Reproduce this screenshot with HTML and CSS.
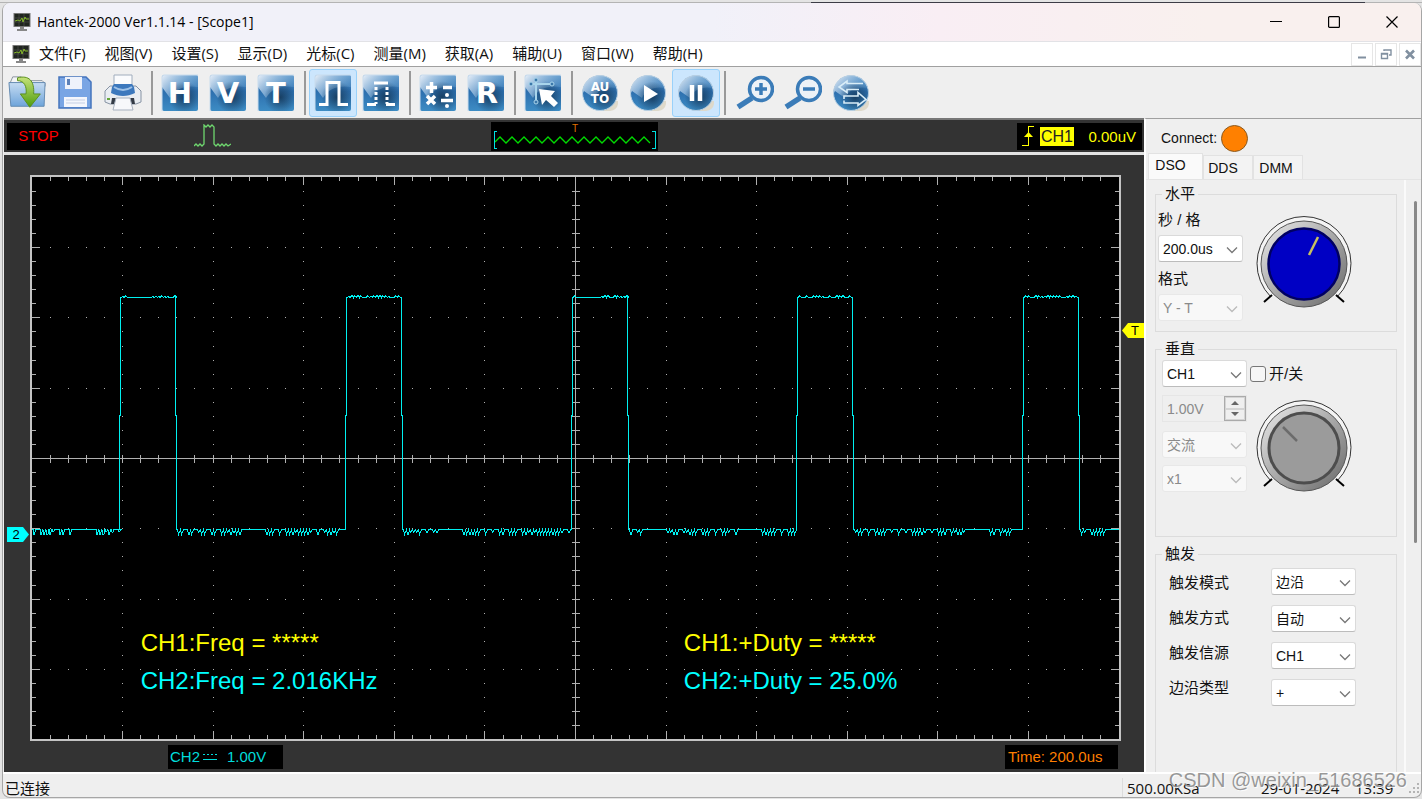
FILE: index.html
```html
<!DOCTYPE html>
<html lang="zh-CN">
<head>
<meta charset="utf-8">
<meta name="viewport" content="width=device-width, initial-scale=1">
<title>Hantek-2000 Ver1.1.14 - [Scope1]</title>
<link rel="stylesheet" href="styles.css">
</head>
<body>
<svg class="defs" aria-hidden="true">
  <defs>
    <linearGradient id="tileFill" x1="0" y1="0" x2="0" y2="1"><stop offset="0" stop-color="#4f8fc6"/><stop offset=".45" stop-color="#2d6fae"/><stop offset="1" stop-color="#3d8cc4"/></linearGradient>
    <linearGradient id="gloss" x1="0" y1="0" x2="1" y2=".6"><stop offset="0" stop-color="#e8eff8"/><stop offset="1" stop-color="#5b98cc" stop-opacity=".35"/></linearGradient>
    <radialGradient id="shade" cx=".62" cy=".62" r=".45"><stop offset="0" stop-color="#0f2c48" stop-opacity=".75"/><stop offset="1" stop-color="#0f2c48" stop-opacity="0"/></radialGradient>
    <linearGradient id="folderFill" x1="0" y1="0" x2="0" y2="1"><stop offset="0" stop-color="#c6dcf2"/><stop offset="1" stop-color="#6ea4da"/></linearGradient>
    <linearGradient id="greenFill" x1="0" y1="0" x2="0" y2="1"><stop offset="0" stop-color="#c5e27a"/><stop offset="1" stop-color="#4f9d0c"/></linearGradient>
    <linearGradient id="metal" x1="0" y1="0" x2="1" y2="1"><stop offset=".1" stop-color="#dedede"/><stop offset=".9" stop-color="#747474"/></linearGradient>
    <symbol id="app" viewBox="0 0 18 20"><rect x=".5" y="1" width="17" height="14" fill="#777"/><rect x="1.5" y="2" width="15" height="12" fill="#20251f"/><path d="M2 6h14M2 10h14M6 2v12M11 2v12" stroke="#555" stroke-width=".6"/><path d="M2 9l3-1 2 1 2-3 1 4 2-5 1 2h3" fill="none" stroke="#86b92c"/><path d="M7 15h4v2h3v2H4v-2h3z" fill="#888"/></symbol>
    <symbol id="tile" viewBox="0 0 38 38"><rect x="1" y="1" width="36" height="36" rx="2" fill="url(#tileFill)"/><path d="M1 3q0-2 2-2h32q2 0 2 2v10C25 11 15 14 9 24L1 13z" fill="url(#gloss)"/><rect x="1" y="1" width="36" height="36" rx="2" fill="url(#shade)"/><path d="M1 37V3q0-2 2-2h34" fill="none" stroke="#c9dced"/></symbol>
    <symbol id="ball" viewBox="0 0 38 38"><path d="M26 27h11v3q-1 6-8 7h-7z" fill="#ded9ca"/><circle cx="19" cy="19" r="17.5" fill="url(#tileFill)"/><path d="M2 19C1 9 9 1 19 1.500S35 8 36 14C26 12 17 15 13 24L3 17z" fill="url(#gloss)"/><circle cx="19" cy="19" r="17.5" fill="url(#shade)"/><circle cx="19" cy="19" r="17.5" fill="none" stroke="#b8cfe2"/></symbol>
    <symbol id="chev" viewBox="0 0 12 8"><path d="M1 1.500l5 5 5-5" fill="none" stroke="currentColor" stroke-width="1.300"/></symbol>
  </defs>
</svg>

<div class="window">
  <header class="titlebar">
    <svg class="app-icon"><use href="#app"/></svg>
    <h1 class="title">Hantek-2000 Ver1.1.14 - [Scope1]</h1>
    <div class="win-controls">
      <button aria-label="最小化"><svg viewBox="0 0 12 12"><path d="M0 5.500h12"/></svg></button>
      <button aria-label="最大化"><svg viewBox="0 0 12 12"><rect x=".6" y=".6" width="10.800" height="10.800" rx="1"/></svg></button>
      <button aria-label="关闭"><svg viewBox="0 0 12 12"><path d="M.5.500l11 11M11.500.500l-11 11"/></svg></button>
    </div>
  </header>

  <nav class="menubar">
    <svg class="app-icon"><use href="#app"/></svg>
    <div class="menus">
      <button>文件(F)</button><button>视图(V)</button><button>设置(S)</button><button>显示(D)</button><button>光标(C)</button><button>测量(M)</button><button>获取(A)</button><button>辅助(U)</button><button>窗口(W)</button><button>帮助(H)</button>
    </div>
    <div class="mdi-controls">
      <button aria-label="最小化子窗口"><svg viewBox="0 0 12 12"><path d="M2 9.500h8" stroke-width="2"/></svg></button>
      <button aria-label="还原子窗口"><svg viewBox="0 0 12 12"><path d="M4 3V2h7v5H9M1.500 5.500h6v5h-6zM1 6h7M4 2h7" stroke-width="1.400"/></svg></button>
      <button aria-label="关闭子窗口"><svg viewBox="0 0 12 12"><path d="M2 2.500l8 8M10 2.500l-8 8" stroke-width="2.600"/></svg></button>
    </div>
  </nav>

  <div class="toolbar" role="toolbar" aria-label="工具栏">
    <button aria-label="打开"><svg viewBox="0 0 40 38"><path d="M2 9l3-7h9l2 4h20l3 3v3H2z" fill="#f2f4f6" stroke="#8a949c"/><path d="M1 8h38l-1 25H3z" fill="url(#folderFill)" stroke="#6289b0"/><path d="M10 3c12-3 18 3 17 17h7L23 34 13 20h6c1-8-2-14-9-14z" fill="url(#greenFill)" stroke="#5a8e1c"/></svg></button>
    <button aria-label="保存"><svg viewBox="0 0 38 38"><path d="M3 3h27l5 5v26H3z" fill="#79a5e4" stroke="#4474bd" stroke-width="1.500"/><path d="M9 3h17v12H9z" fill="#eef2fb"/><rect x="11" y="5" width="3" height="6" fill="#5c80b8"/><path d="M8 23h23v10H8z" fill="#f4f6fc"/><path d="M10 26h19M10 29h19" stroke="#c5cfe4"/></svg></button>
    <button aria-label="打印"><svg viewBox="0 0 38 38"><path d="M6 12h26l5 5v11l-5 2H6l-5-2V17z" fill="#e9edf2" stroke="#8793a4"/><path d="M10 1h18v14H10z" fill="#fafbfd" stroke="#a0adbd"/><path d="M8 13l2-3h18l2 3 1 6c-8 4-16 4-24 0z" fill="#3c78bd"/><path d="M10 13c6 4 12 4 18 0" fill="none" stroke="#9ec2e8" stroke-width="2"/><path d="M8 24h22l1 6H7z" fill="#333a45"/><path d="M12 24h14l3 12H9z" fill="#f7f8fb" stroke="#a7b1bf"/><path d="M3 25h3" stroke="#65a73a" stroke-width="2"/></svg></button>
    <span class="sep"></span>
    <button aria-label="水平"><svg viewBox="0 0 38 38"><use href="#tile"/><text x="19" y="29" class="glyph">H</text></svg></button>
    <button aria-label="垂直"><svg viewBox="0 0 38 38"><use href="#tile"/><text x="19" y="29" class="glyph">V</text></svg></button>
    <button aria-label="触发"><svg viewBox="0 0 38 38"><use href="#tile"/><text x="19" y="29" class="glyph">T</text></svg></button>
    <span class="sep"></span>
    <button class="active" aria-label="方波"><svg viewBox="0 0 38 38"><use href="#tile"/><path d="M5 30.500h8V8.500h12v22h9" fill="none" stroke="#fff" stroke-width="3"/></svg></button>
    <button aria-label="点显示"><svg viewBox="0 0 38 38"><use href="#tile"/><path d="M5 30.500h9M24 30.500h9M12 9h14" stroke="#fff" stroke-width="3"/><path d="M14 13v17M25 13v17" stroke="#fff" stroke-width="3" stroke-dasharray="3 2"/></svg></button>
    <span class="sep"></span>
    <button aria-label="运算"><svg viewBox="0 0 38 38"><use href="#tile"/><path d="M7 13.500h11M12.500 8v11M24 13.500h9M8 22l8 8M16 22l-8 8M22 26.500h12" stroke="#fff" stroke-width="3.500"/><circle cx="28" cy="21" r="2" fill="#fff"/><circle cx="28" cy="32" r="2" fill="#fff"/></svg></button>
    <button aria-label="参考"><svg viewBox="0 0 38 38"><use href="#tile"/><text x="20" y="29" class="glyph">R</text></svg></button>
    <span class="sep"></span>
    <button aria-label="光标"><svg viewBox="0 0 38 38"><use href="#tile"/><path d="M12 5v23M6 10h23" stroke="#a9d5ec" stroke-width="2"/><g fill="#3b78aa" stroke="#a9d5ec"><circle cx="12" cy="6" r="2"/><circle cx="7" cy="10" r="2"/><circle cx="28" cy="10" r="2"/><circle cx="12" cy="28" r="2"/></g><path d="M15 15l16 2-4 5 7 7-4 4-8-7-4 5z" fill="#fff"/></svg></button>
    <span class="sep"></span>
    <button aria-label="自动设置"><svg viewBox="0 0 38 38"><use href="#ball"/><text x="19" y="17" class="glyph small">AU</text><text x="19" y="29" class="glyph small">TO</text></svg></button>
    <button aria-label="运行"><svg viewBox="0 0 38 38"><use href="#ball"/><path d="M15 11l14 9-14 8z" fill="#fff"/></svg></button>
    <button class="active" aria-label="暂停"><svg viewBox="0 0 38 38"><use href="#ball"/><path d="M15 11v16M23 11v16" stroke="#fff" stroke-width="4.500"/></svg></button>
    <span class="sep wide"></span>
    <button aria-label="放大"><svg viewBox="0 0 38 38"><g fill="none" stroke="#3b7cb8"><circle cx="25" cy="15" r="11.500" stroke-width="3.500" fill="#edf2f7"/><path d="M16 24L2 33" stroke-width="5.500"/><path d="M19 15h12M25 9v12" stroke-width="3.500"/></g></svg></button>
    <button aria-label="缩小"><svg viewBox="0 0 38 38"><g fill="none" stroke="#3b7cb8"><circle cx="25" cy="15" r="11.500" stroke-width="3.500" fill="#edf2f7"/><path d="M16 24L2 33" stroke-width="5.500"/><path d="M19 15h12" stroke-width="3.500"/></g></svg></button>
    <button aria-label="切换"><svg viewBox="0 0 38 38"><use href="#ball"/><path d="M31 9.500H15V7l-8 6 8 5.500v-3h12M12 26.500v2.500h14v2.500l8-6-8-7v3.500H12v3" fill="none" stroke="#d9edf8" stroke-width="1.600"/></svg></button>
  </div>

  <main class="main">
    <section class="scope" aria-label="示波器">
      <div class="scope-top">
        <div class="top-left">
          <span class="lcd stop">STOP</span>
          <svg class="pulse" viewBox="0 0 37 24"><path d="M0 22l2-2 2 2 2-2 2 2 2-2V1l2 2 2-2 2 2 2-2 2 2V20l2 2 2-2 2 2 2-2 2 2 2-2 2 2 3-2"/></svg>
        </div>
        <svg class="preview" viewBox="0 0 167 29">
          <path id="previewWave" fill="none" stroke="#00dc00" stroke-width="1.300"/>
          <path d="M6 9.500H3.500v17H6M161 9.500h3.500v17H161" fill="none" stroke="#00e0e0" shape-rendering="crispEdges"/>
          <text x="84" y="10" class="preview-mark">T</text>
        </svg>
        <div class="lcd trigger">
          <svg viewBox="0 0 12 22"><path d="M0 20.500h6.500V1.500H12" fill="none" stroke="#ff0" shape-rendering="crispEdges"/><path d="M2 12l4.500-5 4.500 5z" fill="#ff0"/></svg>
          <span class="trigger-source">CH1</span>
          <span class="trigger-level">0.00uV</span>
        </div>
      </div>
      <div class="scope-body">
        <div class="plot">
          <svg viewBox="0 0 1087 562" preserveAspectRatio="none" shape-rendering="crispEdges" role="img" aria-label="CH2 波形">
            <g id="graticule" stroke="#b0b0b0"></g>
            <path id="trace" fill="none" stroke="#00f0f0"/>
          </svg>
          <div class="readout">
            <div><p class="ch1">CH1:Freq = *****</p><p class="ch2">CH2:Freq = 2.016KHz</p></div>
            <div><p class="ch1">CH1:+Duty = *****</p><p class="ch2">CH2:+Duty = 25.0%</p></div>
          </div>
          <svg class="marker level" viewBox="0 0 22 15"><path d="M0 7.500L6 0h16v15H6z" fill="#ff0"/><text x="13" y="12">T</text></svg>
          <svg class="marker zero" viewBox="0 0 22 15"><path d="M0 0h16l6 7.500-6 7.500H0z" fill="#0ff"/><text x="9" y="12">2</text></svg>
        </div>
        <div class="scope-foot">
          <div class="lcd channel"><span>CH2</span><svg viewBox="0 0 14 8"><path d="M0 1.500h14" stroke-dasharray="2 2"/><path d="M0 6.500h14"/></svg><span class="volts">1.00V</span></div>
          <div class="lcd time">Time: 200.0us</div>
        </div>
      </div>
    </section>

    <aside class="side">
      <div class="connect"><span>Connect:</span><i class="lamp"></i></div>
      <div class="tabs" role="tablist">
        <button role="tab" aria-selected="true">DSO</button><button role="tab" aria-selected="false">DDS</button><button role="tab" aria-selected="false">DMM</button>
      </div>
      <div class="pane">
        <div class="groups">
          <fieldset class="group horizontal">
            <legend>水平</legend>
            <div class="fields">
              <label for="timebase">秒 / 格</label>
              <div class="combo"><select id="timebase"><option>200.0us</option></select><svg><use href="#chev"/></svg></div>
              <label for="format">格式</label>
              <div class="combo"><select id="format" disabled><option>Y - T</option></select><svg><use href="#chev"/></svg></div>
            </div>
            <svg class="knob" viewBox="0 0 96 92"><path d="M14.500 80.500A47 47 0 1 1 81.500 80.500" fill="#f4f4f4" stroke="#333"/><circle cx="48" cy="48" r="43" fill="url(#metal)" stroke="#555"/><circle cx="48" cy="48" r="35.500" fill="#0000c4" stroke="#000062" stroke-width="2.500"/><path d="M53 39l9-18" stroke="#c8c060" stroke-width="2.500"/><path d="M16 79l-8 7M80 79l8 7" stroke="#000" stroke-width="2"/></svg>
          </fieldset>

          <fieldset class="group vertical">
            <legend>垂直</legend>
            <div class="channel-row">
              <div class="combo"><select aria-label="通道"><option>CH1</option></select><svg><use href="#chev"/></svg></div>
              <label class="check"><input type="checkbox">开/关</label>
            </div>
            <div class="channel-detail">
              <div class="stack">
                <div class="spin"><input type="text" value="1.00V" aria-label="电压" disabled><div class="spin-buttons"><button disabled aria-label="增加"><svg viewBox="0 0 8 4"><path d="M4 0l4 4H0z"/></svg></button><button disabled aria-label="减少"><svg viewBox="0 0 8 4"><path d="M0 0h8L4 4z"/></svg></button></div></div>
                <div class="combo"><select aria-label="耦合" disabled><option>交流</option></select><svg><use href="#chev"/></svg></div>
                <div class="combo"><select aria-label="探头" disabled><option>x1</option></select><svg><use href="#chev"/></svg></div>
              </div>
              <svg class="knob" viewBox="0 0 96 92"><path d="M14.500 80.500A47 47 0 1 1 81.500 80.500" fill="#f4f4f4" stroke="#333"/><circle cx="48" cy="48" r="43" fill="url(#metal)" stroke="#555"/><circle cx="48" cy="48" r="35" fill="#9b9b9b" stroke="#4d4d4d" stroke-width="3"/><path d="M27 27l14 14" stroke="#6c6c6c" stroke-width="2.500"/><path d="M16 79l-8 7M80 79l8 7" stroke="#000" stroke-width="2"/></svg>
            </div>
          </fieldset>

          <fieldset class="group triggers">
            <legend>触发</legend>
            <div class="trig-grid">
              <div class="trig-labels"><label for="tmode">触发模式</label><label for="tway">触发方式</label><label for="tsrc">触发信源</label><label for="tedge">边沿类型</label></div>
              <div class="trig-fields">
                <div class="combo"><select id="tmode"><option>边沿</option></select><svg><use href="#chev"/></svg></div>
                <div class="combo"><select id="tway"><option>自动</option></select><svg><use href="#chev"/></svg></div>
                <div class="combo"><select id="tsrc"><option>CH1</option></select><svg><use href="#chev"/></svg></div>
                <div class="combo"><select id="tedge"><option>+</option></select><svg><use href="#chev"/></svg></div>
              </div>
            </div>
          </fieldset>
        </div>
        <div class="scrollbar"><i></i></div>
      </div>
    </aside>
  </main>

  <footer class="status">
    <span class="state">已连接</span>
    <span class="rate">500.00KSa</span>
    <span class="date">29-01-2024</span>
    <span class="clock">13:39</span>
    <svg class="grip" viewBox="0 0 12 12"><path d="M9 1h2v2H9zM5 5h2v2H5zM9 5h2v2H9zM1 9h2v2H1zM5 9h2v2H5zM9 9h2v2H9z" fill="#b4b4b4"/></svg>
  </footer>
</div>
<div class="watermark">CSDN @weixin_51686526</div>
<script src="script.js"></script>
</body>
</html>
```

FILE: styles.css
```css
* { box-sizing: border-box; }

:root {
  --face: #efefef;
  --dark: #333;
  --ui: "Liberation Sans", "Noto Sans CJK SC", sans-serif;
  --menu: "Open Sans", "Noto Sans CJK SC", sans-serif;
}

body {
  margin: 0;
  height: 100vh;
  padding: 3px 0 1px 2px;
  display: flex;
  overflow: hidden;
  font: 14px/20px var(--ui);
  color: #111;
  background:
    linear-gradient(to right, #b4b4b4 57%, #3c3c46 57%, #3c3c46 96%, #b4b4b4 96%) 0 2px / 100% 1px no-repeat,
    #e4e4e4;
}

button, input, select { font: inherit; color: inherit; margin: 0; padding: 0; }
button { border: 0; background: none; }
.defs { position: absolute; width: 0; height: 0; }

.window {
  flex: 1;
  min-width: 0;
  display: flex;
  flex-direction: column;
  overflow: hidden;
  border: 1px solid #a6a6a6;
  border-top: 0;
  border-radius: 8px;
  background: var(--face);
}

/* Title bar */
.titlebar {
  display: flex;
  align-items: center;
  height: 39px;
  padding-left: 10px;
  border-bottom: 1px solid #e2e2e6;
  background: linear-gradient(to right, #f1f1f9 50%, #f9eef4 66%, #f9f0ee 85%);
}
.app-icon { width: 18px; height: 20px; }
.title { margin: 0 0 0 6px; font: 14px/20px var(--menu); color: #000; }
.win-controls { display: flex; margin-left: auto; }
.win-controls button { width: 58px; height: 36px; display: grid; place-items: center; }
.win-controls svg { width: 12px; height: 12px; fill: none; stroke: #000; stroke-width: 1.2; }

/* Menu bar */
.menubar {
  display: flex;
  align-items: center;
  height: 24px;
  padding-left: 9px;
  background: #fff;
}
.menus { display: flex; gap: 19px; margin-left: 9px; padding-bottom: 2px; font: 15px/22px var(--menu); }
.mdi-controls { display: flex; gap: 2px; margin-left: auto; }
.mdi-controls button { width: 22px; height: 23px; border: 1px solid #e6e6e6; display: grid; place-items: center; }
.mdi-controls svg { width: 12px; height: 12px; fill: none; stroke: #8190a0; }

/* Toolbar */
.toolbar {
  display: flex;
  align-items: center;
  height: 52px;
  border-top: 1px solid #a0a0a0;
  background: var(--face);
}
.toolbar button { width: 48px; height: 48px; display: grid; place-items: center; border: 1px solid transparent; border-radius: 3px; }
.toolbar button.active { background: #cce6fd; border-color: #99d1fa; }
.toolbar svg { width: 38px; height: 38px; }
.sep { width: 2px; height: 44px; margin: 0 3px 0 4px; background: #999; }
.sep.wide { margin-right: 5px; }
.glyph { font: bold 29px "DejaVu Sans", sans-serif; fill: #fff; text-anchor: middle; }
.glyph.small { font-size: 12px; }

/* Scope */
.main { flex: 1; min-height: 0; display: flex; }
.scope {
  flex: 1;
  min-width: 0;
  display: flex;
  flex-direction: column;
  margin-left: 1px;
  border-top: 2px solid #777;
  background: var(--dark);
}
.scope-top {
  display: grid;
  grid-template-columns: 1fr 167px 1fr;
  align-items: center;
  height: 35px;
  padding: 0 2px 0 3px;
  border-bottom: 3px solid #e2e2e2;
}
.lcd { display: flex; align-items: center; background: #000; }
.top-left { display: flex; align-items: center; }
.stop { width: 63px; height: 27px; justify-content: center; color: #f00; font-size: 15px; }
.pulse { width: 37px; height: 24px; margin-left: 124px; fill: none; stroke: #6fd86f; stroke-width: 1.3; }
.preview { width: 167px; height: 29px; background: #000; }
.preview-mark { font: 10px var(--ui); fill: #e07000; text-anchor: middle; }
.trigger { justify-self: end; width: 125px; height: 27px; padding: 0 6px 0 5px; font-size: 16px; }
.trigger svg { width: 12px; height: 22px; }
.trigger-source { margin-left: 6px; padding: 1px 1px 0; line-height: 18px; background: #ff0; color: #222; }
.trigger-level { margin-left: auto; padding-top: 2px; color: #ff0; font-size: 15px; }

.scope-body { flex: 1; min-height: 0; display: flex; flex-direction: column; padding: 20px 23px 3px 26px; }
.plot { position: relative; flex: 1; min-height: 0; border: 2px solid #c4c4c4; background: #000; }
.plot > svg:first-child { display: block; width: 100%; height: 100%; }
.readout {
  position: absolute;
  left: 10%;
  right: 0;
  bottom: 7%;
  display: grid;
  grid-template-columns: 1fr 1fr;
  column-gap: 108px;
  font-size: 24px;
}
.readout p { margin: 0; line-height: 38px; white-space: nowrap; }
.ch1 { color: #ff0; }
.ch2 { color: #0ff; }
.marker { position: absolute; width: 22px; height: 15px; font: 13px var(--ui); text-anchor: middle; }
.level { left: 100%; top: 26%; margin-left: 3px; }
.zero { right: 100%; bottom: 35%; margin-right: 3px; }

.scope-foot { display: flex; justify-content: space-between; padding: 4px 3px 0 138px; font-size: 16px; }
.channel { width: 115px; height: 24px; padding-left: 2px; color: #00dcdc; }
.channel svg { width: 14px; height: 8px; margin-left: 3px; stroke: currentColor; fill: none; }
.volts { margin-left: 10px; }
.time { width: 113px; height: 24px; padding-left: 3px; color: #ff7f00; }
.channel, .time { font-size: 15px; }

/* Side panel */
.side { width: 277px; display: flex; flex-direction: column; border-left: 2px solid #fff; border-top: 1px solid #a0a0a0; }
.connect { display: flex; align-items: center; gap: 4px; height: 35px; padding: 3px 0 0 15px; }
.lamp { width: 27px; height: 27px; border: 1px solid #8a5a20; border-radius: 50%; background: #ff8000; }
.tabs { display: flex; align-items: flex-end; height: 26px; border-bottom: 1px solid #e4e4e4; padding-left: 2px; }
.tabs button { width: 50px; height: 24px; padding-right: 10px; border: 1px solid #e2e2e2; border-bottom: 0; background: #f3f3f3; }
.tabs button:last-child { padding-right: 4px; }
.tabs button[aria-selected="true"] { width: 55px; height: 26px; padding-bottom: 3px; background: #fafafa; }

.pane { flex: 1; min-height: 0; display: flex; overflow: hidden; }
.groups { flex: 1; padding: 4px 7px 0 9px; border-right: 2px solid #fafafa; }
.scrollbar { width: 15px; padding: 21px 4px 0 0; display: flex; justify-content: flex-end; }
.scrollbar i { width: 3px; height: 342px; border-radius: 2px; background: #888; }

.group { min-width: 0; margin: 0 0 7px; padding: 0; border: 1px solid #dcdcdc; }
.group legend { margin-left: 6px; padding: 0 3px; font-size: 15px; line-height: 20px; }
.group label { font-size: 15px; line-height: 20px; }

.horizontal { display: flex; align-items: flex-start; height: 148px; }
.fields { display: flex; flex-direction: column; width: 88px; padding: 6px 0 0 2px; }
.fields .combo { margin: 5px 0 7px 0; }
.knob { flex: none; width: 96px; height: 92px; overflow: visible; }
.horizontal .knob { margin: 12px 0 0 12px; }

.combo { position: relative; width: 85px; height: 27px; }
.combo select {
  width: 100%;
  height: 100%;
  padding: 0 20px 0 4px;
  appearance: none;
  border: 1px solid #dadada;
  border-bottom-color: #bcbcbc;
  border-radius: 3px;
  background: #fff;
  color: #111;
  opacity: 1;
}
.combo select:disabled { border-color: #e8e8e8; background: #f8f8f8; color: #8a8a8a; }
.combo svg { position: absolute; right: 5px; top: 11px; width: 12px; height: 8px; color: #777; pointer-events: none; }
.combo select:disabled + svg { color: #bbb; }

.vertical { height: 198px; }
.channel-row { display: flex; align-items: center; gap: 3px; padding: 1px 0 0 6px; }
.check { display: flex; align-items: center; gap: 3px; }
.check input { width: 16px; height: 16px; appearance: none; border: 1px solid #777; border-radius: 3px; background: #f6f6f6; }
.channel-detail { display: flex; padding: 8px 0 0 6px; }
.stack { display: flex; flex-direction: column; gap: 7px; }
.spin { display: flex; width: 85px; height: 27px; margin-bottom: 2px; border: 1px solid #e6e6e6; }
.spin input { flex: 1; min-width: 0; padding-left: 4px; border: 0; background: var(--face); color: #8a8a8a; }
.spin-buttons { width: 22px; display: flex; flex-direction: column; border: 1px solid #aaa; }
.spin-buttons button { flex: 1; display: grid; place-items: center; border: 1px solid #d4d4d4; }
.spin-buttons svg { width: 8px; height: 4px; fill: #666; }
.channel-detail .knob { margin: 5px 0 0 9px; }

.triggers { height: 240px; margin-bottom: 0; }
.trig-grid { display: flex; padding: 4px 0 0 13px; }
.trig-labels { display: flex; flex-direction: column; width: 102px; gap: 15px; padding-top: 5px; }
.trig-fields { display: flex; flex-direction: column; gap: 10px; }

/* Status bar */
.status {
  display: flex;
  align-items: center;
  height: 25px;
  padding: 4px 1px 0 2px;
  border-top: 2px solid #fff;
  font: 15px/20px var(--menu);
}
.state { flex: 1; }
.rate { width: 139px; padding-left: 4px; border-left: 1px solid #dcdcdc; }
.date { width: 94px; }
.clock { width: 53px; }
.grip { width: 12px; height: 12px; }

.watermark {
  position: absolute;
  right: 15px;
  bottom: 7px;
  font: 20px/24px "Liberation Sans", sans-serif;
  color: rgba(120, 120, 120, .75);
  text-shadow: 1px 1px 0 rgba(255, 255, 255, .8);
}
```

FILE: script.js
```js
const W = 1087, H = 562, CX = 543.5, CY = 281.5;
const DX = 90.6, DY = 70.3;
const snap = v => Math.floor(v) + 0.5;

function graticule() {
  const seg = [];
  const line = (x1, y1, x2, y2) => seg.push(`M${x1} ${y1}L${x2} ${y2}`);
  line(0, CY, W, CY);
  line(CX, 0, CX, H);
  for (let i = -29; i <= 29; i++) {
    const x = snap(CX + i * DX / 5), major = i % 5 === 0, len = major ? 8 : 4;
    line(x, 0, x, len);
    line(x, H - len, x, H);
    line(x, CY - 4, x, CY + 4);
    for (let j = -3; j <= 3; j++) {
      const y = Math.floor(CY + j * DY);
      line(x, y, x, y + 1);
    }
  }
  for (let i = -19; i <= 19; i++) {
    const y = snap(CY + i * DY / 5), major = i % 5 === 0, len = major ? 8 : 4;
    line(0, y, len, y);
    line(W - len, y, W, y);
    line(CX - 4, y, CX + 4, y);
    for (let j = -5; j <= 5; j++) {
      const x = Math.floor(CX + j * DX);
      line(x, y, x + 1, y);
    }
  }
  document.getElementById('graticule').innerHTML = `<path d="${seg.join('')}"/>`;
}

let seed = 11;
function rand() {
  seed = (seed * 16807) % 2147483647;
  return seed / 2147483647;
}

/* Level line with bursts of quantisation noise between x0 and x1. */
function level(x0, x1, base, amp) {
  let d = `L${x0} ${base}`, quiet = 0;
  for (let x = x0 + 1; x < x1 - 1;) {
    if (quiet > 0) {
      quiet -= 2;
      x += 2;
      d += `L${x} ${base}`;
      continue;
    }
    const depth = rand() < 0.75 ? amp : amp / 2;
    d += `L${x} ${base}L${x + 1} ${base + depth}`;
    if (rand() < 0.3) d += `L${x + 2} ${base + depth}`;
    x += 3;
    d += `L${x} ${base}`;
    const r = rand();
    if (r < 0.08) quiet = 24;
    else if (r < 0.35) quiet = 4;
  }
  return d + `L${x1} ${base}`;
}

function trace() {
  const rises = [87.5, 313.5, 539.5, 764.5, 990.5];
  let d = 'M0 352.5', x = 0;
  for (const r of rises) {
    d += level(x, r, 352.5, 5);
    d += `V238.500H${r + 1}V120.500`;
    d += level(r + 1, r + 56, 120.5, -2);
    d += `V124.500V238.500H${r + 57}V352.500`;
    x = r + 57;
  }
  d += level(x, W, 352.5, 5);
  document.getElementById('trace').setAttribute('d', d);
}

function preview() {
  let d = 'M4 20';
  for (let x = 9, up = true; x < 164; x += 6, up = !up) d += `L${x} ${up ? 15 : 21}`;
  document.getElementById('previewWave').setAttribute('d', d);
}

graticule();
trace();
preview();
```
